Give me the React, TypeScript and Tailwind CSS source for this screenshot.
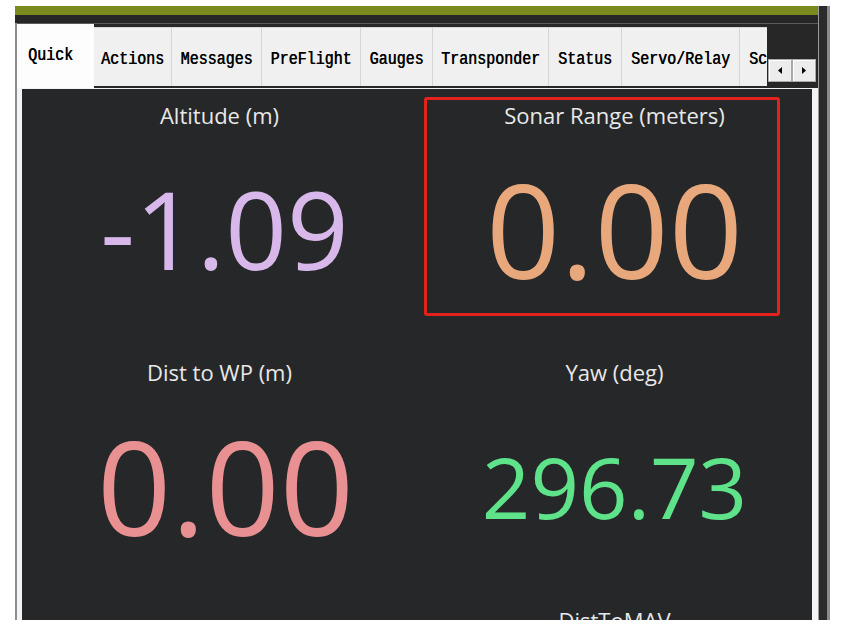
import React from 'react';

const tabs = [
  { label: 'Actions', width: 'w-[78px]' },
  { label: 'Messages', width: 'w-[90px]' },
  { label: 'PreFlight', width: 'w-[99px]' },
  { label: 'Gauges', width: 'w-[72px]' },
  { label: 'Transponder', width: 'w-[116px]' },
  { label: 'Status', width: 'w-[73px]' },
  { label: 'Servo/Relay', width: 'w-[118px]' },
  { label: 'Scripting', width: 'w-[100px]' },
];

type MetricProps = {
  label: string;
  value: string;
  valueClass: string;
  boxed?: boolean;
};

const Metric = ({ label, value, valueClass, boxed }: MetricProps) => (
  <div className="relative flex flex-col items-center">
    {boxed && (
      <div className="absolute left-[7px] top-[8px] h-[219px] w-[356px] rounded-[3px] border-[3px] border-[#e3231b]" />
    )}
    <div className="pt-[12px] text-[22px] leading-[28px] text-[#e8e8e8]">{label}</div>
    <div className={`flex h-[200px] items-center leading-none ${valueClass}`}>{value}</div>
  </div>
);

const ArrowButton = ({ dir }: { dir: 'left' | 'right' }) => (
  <div className="flex h-[23px] w-[24px] items-center justify-center border border-[#a9a9a9] bg-[#ececec] shadow-[inset_1px_1px_0_#ffffff]">
    <svg width="4" height="7" viewBox="0 0 4 7">
      {dir === 'left'
        ? <polygon points="4,0 4,7 0,3.5" fill="#000" />
        : <polygon points="0,0 0,7 4,3.5" fill="#000" />}
    </svg>
  </div>
);

export default function App() {
  return (
    <div className="h-[631px] w-[842px] overflow-hidden bg-white pl-[15px] pt-[6px] font-['Open_Sans',sans-serif]">
      <div className="flex h-[614px] w-[815px]">
        {/* main window */}
        <div className="flex min-h-0 flex-1 flex-col">
          <div className="h-[9px] shrink-0 bg-[#7a8a1e]" />
          <div className="h-[8px] shrink-0 bg-[#262626]" />

          <div className="flex min-h-0 flex-1 flex-col border-l-2 border-[#8d8d8d]">
            {/* tab strip */}
            <div className="flex h-[65px] shrink-0 border-t border-[#5c5c5c] bg-[#272727]">
              <div className="flex h-full w-[750px] items-start overflow-hidden font-['Liberation_Mono',monospace] text-[15px] text-black [text-shadow:0.5px_0_0_#000]">
                <div className="flex h-[64px] w-[77px] shrink-0 items-center bg-[#fdfdfd] pl-[11px]">
                  <span className="inline-block scale-y-[1.22]">Quick</span>
                </div>
                {tabs.map(tab => (
                  <div
                    key={tab.label}
                    className={`mt-[3px] flex h-[59px] shrink-0 items-center justify-center whitespace-nowrap border-r border-t border-[#d6d6d6] bg-[#f0f0f0] pt-[7px] ${tab.width}`}
                  >
                    <span className="inline-block scale-y-[1.22]">{tab.label}</span>
                  </div>
                ))}
              </div>
              <div className="ml-[1px] mt-[35px] flex self-start">
                <ArrowButton dir="left" />
                <ArrowButton dir="right" />
              </div>
            </div>

            {/* tab page */}
            <div className="flex min-h-0 flex-1 bg-[#f4f4f4] pl-[5px] pr-[6px] pt-[1px]">
              <div className="grid min-h-0 flex-1 grid-cols-2 grid-rows-[257px_248px_250px] overflow-hidden bg-[#262729]">
                <Metric label="Altitude (m)" value="-1.09" valueClass="pl-[10px] text-[108px] text-[#d8b8ea]" />
                <Metric label="Sonar Range (meters)" value="0.00" valueClass="text-[130px] text-[#e9a87c]" boxed />
                <Metric label="Dist to WP (m)" value="0.00" valueClass="pl-[12px] text-[130px] text-[#e99192]" />
                <Metric label="Yaw (deg)" value="296.73" valueClass="text-[85px] text-[#5ee38a]" />
                <div />
                <Metric label="DistToMAV" value="0.00" valueClass="text-[130px] text-[#e8e8e8]" />
              </div>
            </div>
          </div>
        </div>

        {/* window edge */}
        <div className="w-[12px] border-l border-r-[3px] border-l-[#9a9a9a] border-r-[#8a8a8a] bg-[#2b2b2b]" />
      </div>
    </div>
  );
}
